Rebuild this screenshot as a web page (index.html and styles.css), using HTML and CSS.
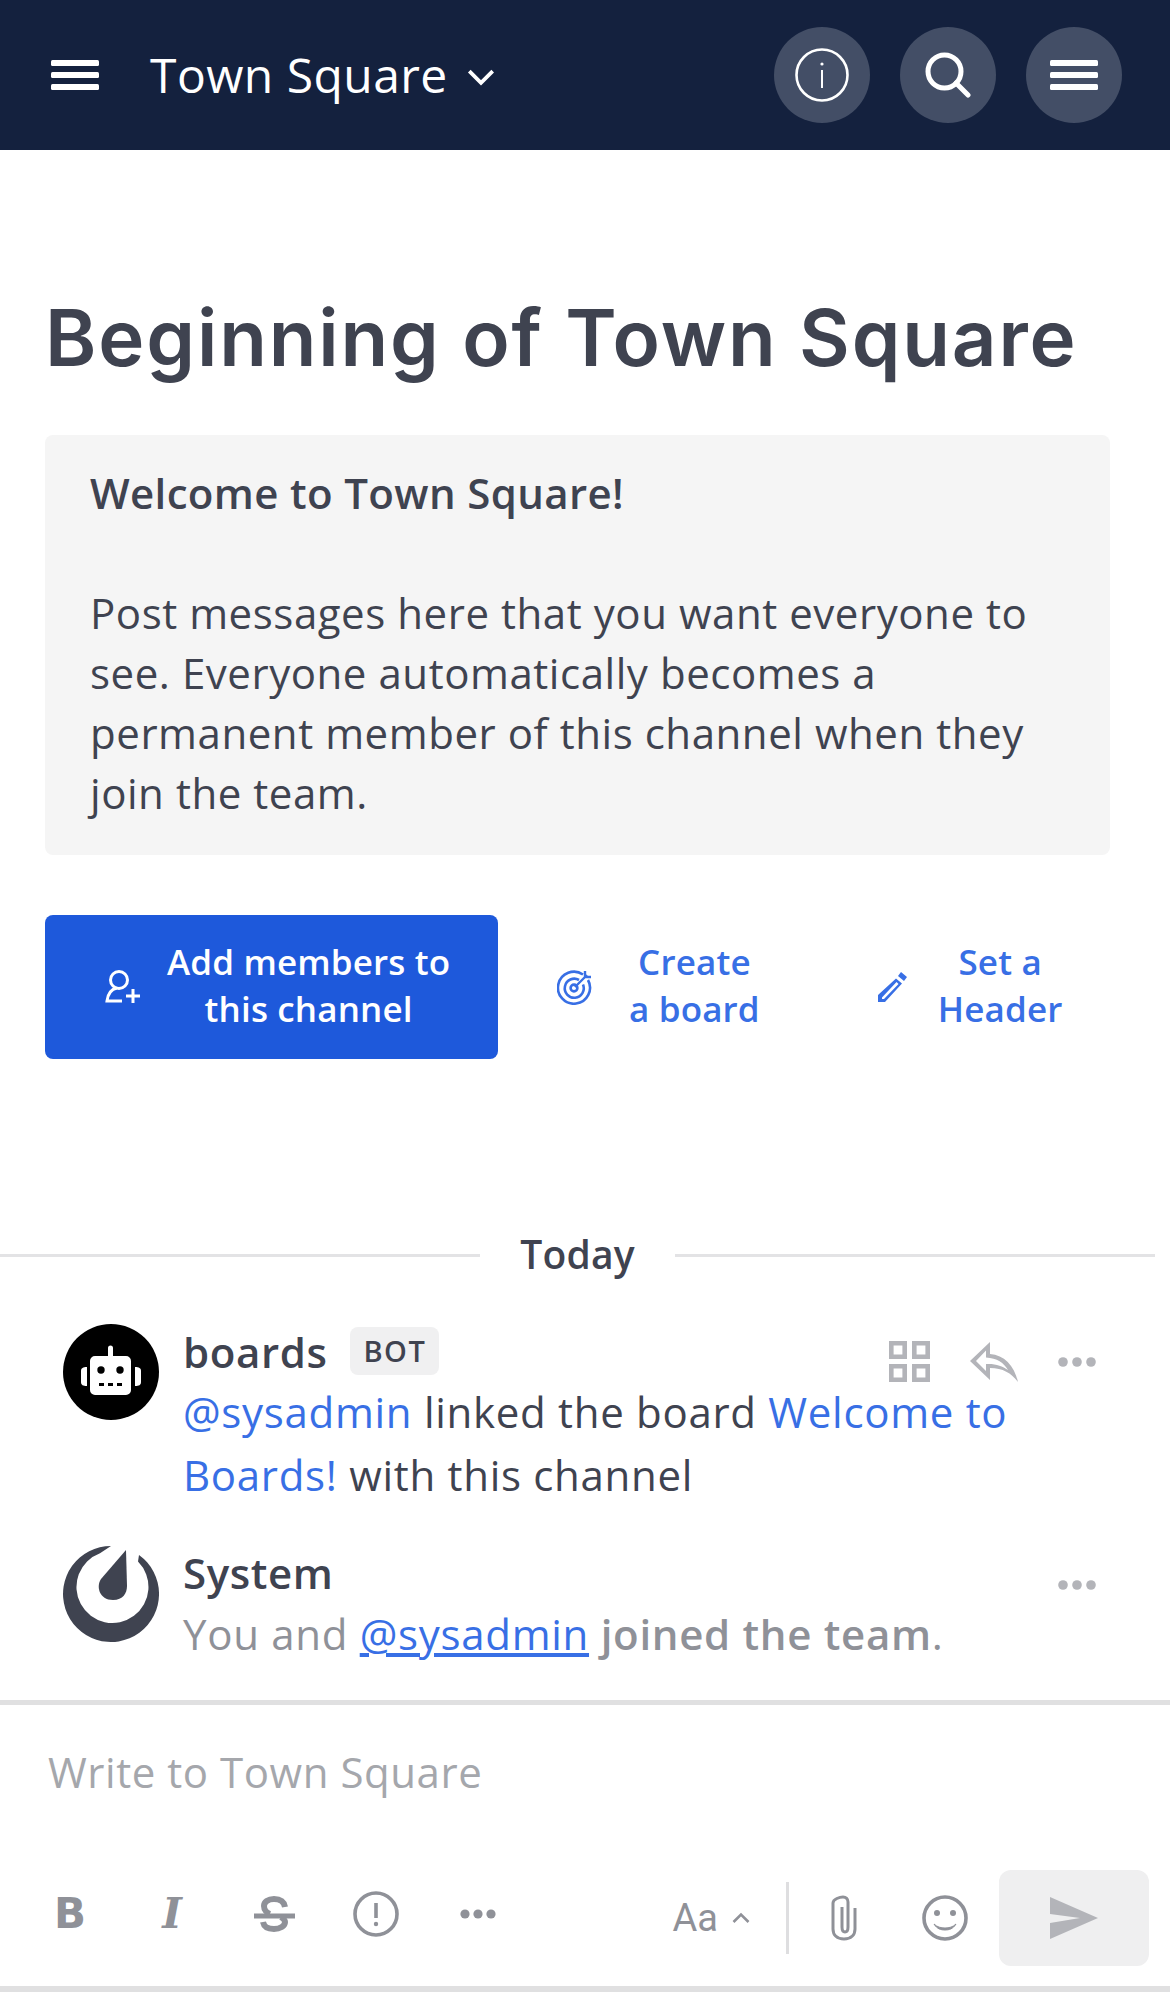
FILE: index.html
```html
<!DOCTYPE html>
<html lang="en">
<head>
    <meta charset="UTF-8">
    <meta name="viewport" content="width=device-width, initial-scale=1.0">
    <title>Town Square</title>
    <link rel="stylesheet" href="styles.css">
</head>
<body>
    <header class="topbar">
        <svg class="menu-icon" viewBox="0 0 48 30"><rect width="48" height="6" rx="1.500"/><rect y="12" width="48" height="6" rx="1.500"/><rect y="24" width="48" height="6" rx="1.500"/></svg>
        <div class="channel-name">Town Square</div>
        <svg class="chevron" viewBox="0 0 26 16"><path d="M2 2l11 11L24 2"/></svg>
        <div class="top-actions">
            <div class="round-btn">
                <svg viewBox="0 0 54 54" width="54" height="54"><circle cx="27" cy="27" r="25.500" fill="none" stroke="#fff" stroke-width="2.600"/><circle cx="27" cy="16" r="1.600" fill="#fff"/><path d="M27 22v18" stroke="#fff" stroke-width="2"/></svg>
            </div>
            <div class="round-btn">
                <svg viewBox="0 0 46 46" width="46" height="46"><circle cx="19.500" cy="19.500" r="16.500" fill="none" stroke="#fff" stroke-width="5"/><path d="M31 31l12 12" stroke="#fff" stroke-width="5" stroke-linecap="round"/></svg>
            </div>
            <div class="round-btn">
                <svg viewBox="0 0 48 30" width="48" height="30" fill="#fff"><rect width="48" height="6" rx="1.500"/><rect y="12" width="48" height="6" rx="1.500"/><rect y="24" width="48" height="6" rx="1.500"/></svg>
            </div>
        </div>
    </header>

    <main class="intro">
        <h1>Beginning of Town Square</h1>
        <div class="purpose">
            <strong>Welcome to Town Square!</strong><br><br>
            Post messages here that you want everyone to see. Everyone automatically becomes a permanent member of this channel when they join the team.
        </div>
        <div class="intro-actions">
            <div class="action primary">
                <svg viewBox="0 0 36 36" width="36" height="36" fill="none" stroke="#fff" stroke-width="3"><circle cx="14" cy="11" r="8.500"/><path d="M12 19c-5 1-9 5-10 13h15"/><path d="M28 20v14M21 27h14"/></svg>
                <span>Add members to<br>this channel</span>
            </div>
            <div class="action board">
                <svg viewBox="0 0 36 36" width="36" height="36" fill="none" stroke="#386fe5" stroke-width="2.600"><path d="M26 5.500A16 16 0 1 0 31 11"/><path d="M22 11a9.500 9.500 0 1 0 4 4.500"/><circle cx="17" cy="19" r="3.400"/><path d="M18 18L30 6M28 2v6h6" stroke-width="2.400"/></svg>
                <span>Create<br>a board</span>
            </div>
            <div class="action header">
                <svg viewBox="0 0 32 36" width="32" height="36" fill="#386fe5"><path d="M24 3l6 5-3 4-6-5zM19 9.500l6 5L8 33H1v-7zM19.500 13L5 28.500V30h2l14.500-15z" fill-rule="evenodd"/></svg>
                <span>Set a<br>Header</span>
            </div>
        </div>
    </main>

    <div class="date-sep">
        <span class="sep-line"></span>
        <span class="sep-text">Today</span>
        <span class="sep-line"></span>
    </div>

    <section class="posts">
        <article class="post">
            <div class="avatar bot">
                <svg viewBox="0 0 96 96" width="96" height="96"><circle cx="48" cy="48" r="48"/><path fill="#fff" d="M45 24a2.500 2.500 0 0 1 5 0v8h13a5 5 0 0 1 5 5v29a5 5 0 0 1-5 5H32a5 5 0 0 1-5-5V37a5 5 0 0 1 5-5h13zM24 43v19c-4 0-6-1-6-4V47c0-3 2-4 6-4zM72 43v19c4 0 6-1 6-4V47c0-3-2-4-6-4z"/><circle cx="38" cy="46" r="3.700"/><circle cx="57" cy="46" r="3.700"/><path d="M36 59h5v3h-5zM45 59h5v3h-5zM54 59h5v3h-5z"/></svg>
            </div>
            <div class="post-body">
                <div class="post-head"><span class="author">boards</span><span class="bot-tag">BOT</span></div>
                <p class="msg"><a class="link">@sysadmin</a> linked the board <a class="link">Welcome to Boards!</a> with this channel</p>
            </div>
            <div class="post-tools">
                <svg viewBox="0 0 41 41" width="41" height="41" fill="none" stroke="#b3b4b9" stroke-width="4.600"><path d="M2.300 2.300h13.400v13.400H2.300zM25.300 2.300h13.400v13.400H25.300zM2.300 25.300h13.400v13.400H2.300zM25.300 25.300h13.400v13.400H25.300z"/></svg>
                <svg viewBox="0 0 48 40" width="48" height="40" fill="#b3b4b9"><path d="M20 0v12c14 1 24 11 28 28-7-9-15-14-28-14v12L0 19zM16 8.500L6 19l10 10v-7c10-.5 16 2 22 6-4-7-11-12-22-12.500z" fill-rule="evenodd"/></svg>
                <svg viewBox="0 0 38 10" width="38" height="10" fill="#b3b4b9"><circle cx="5" cy="5" r="4.800"/><circle cx="19" cy="5" r="4.800"/><circle cx="33" cy="5" r="4.800"/></svg>
            </div>
        </article>
        <article class="post system">
            <div class="avatar">
                <svg viewBox="0 0 96 96" width="96" height="96" fill="#3f4350"><path d="M48 0A48 48 0 1 0 76 9L75 15.600A36 36 0 1 1 37 7.200z"/><path d="M63 4L38 33C33 40 36 54 50 54C60 54 64 47 64 40z"/></svg>
            </div>
            <div class="post-body">
                <div class="post-head"><span class="author">System</span></div>
                <p class="msg muted">You and <a class="link under">@sysadmin</a> <b>joined the team</b>.</p>
            </div>
            <div class="post-tools">
                <svg viewBox="0 0 38 10" width="38" height="10" fill="#b3b4b9"><circle cx="5" cy="5" r="4.800"/><circle cx="19" cy="5" r="4.800"/><circle cx="33" cy="5" r="4.800"/></svg>
            </div>
        </article>
    </section>

    <footer class="composer">
        <div class="placeholder">Write to Town Square</div>
        <div class="toolbar">
            <div class="format-tools">
                <span class="fmt b">B</span>
                <span class="fmt i">I</span>
                <span class="fmt"><svg viewBox="0 0 41 36" width="41" height="36" fill="none" stroke="#8f9198" stroke-width="6"><path d="M31 11C30 5 25 3 20 3C14 3 10 6 10 10C10 14 13 17 16 18"/><path d="M9 26C10 31 14 33 20 33C26 33 31 30 31 26C31 24 30 23 27 21"/><path d="M0 20h41" stroke-width="5"/></svg></span>
                <span class="fmt"><svg viewBox="0 0 46 46" width="46" height="46" fill="none" stroke="#8f9198" stroke-width="3.600"><circle cx="23" cy="23" r="21"/><path d="M23 12v15"/><circle cx="23" cy="33" r="2.200" fill="#8f9198" stroke="none"/></svg></span>
                <span class="fmt"><svg viewBox="0 0 36 10" width="36" height="10" fill="#8f9198"><circle cx="5" cy="5" r="4.600"/><circle cx="18" cy="5" r="4.600"/><circle cx="31" cy="5" r="4.600"/></svg></span>
            </div>
            <div class="right-tools">
                <span class="aa">Aa</span>
                <svg class="caret" viewBox="0 0 18 12" width="18" height="12" fill="none" stroke="#8f9198" stroke-width="2.600"><path d="M1.500 10L9 2.500 16.500 10"/></svg>
                <span class="divider"></span>
                <svg class="clip" viewBox="0 0 26 46" width="26" height="46" fill="none" stroke="#8f9198" stroke-width="3"><path d="M11 12v20c0 3 1 5 3 5s3-2 3-5V7c0-3-2-5-5-5S2 4 2 8v26c0 6 4 10 11 10s11-4 11-10V13"/></svg>
                <svg class="smile" viewBox="0 0 46 46" width="46" height="46" fill="none" stroke="#8f9198" stroke-width="3.600"><circle cx="23" cy="23" r="21"/><circle cx="15" cy="18" r="3" fill="#8f9198" stroke="none"/><circle cx="31" cy="18" r="3" fill="#8f9198" stroke="none"/><path d="M12 29c3 3 7 4 11 4s8-1 11-4c-3 5-7 6-11 6s-8-1-11-6z" fill="#8f9198" stroke-width="1"/></svg>
                <div class="send">
                    <svg viewBox="0 0 48 42" width="48" height="42" fill="#b3b4b9"><path d="M0 0l48 21L0 42V26l30-5L0 17z"/></svg>
                </div>
            </div>
        </div>
    </footer>
</body>
</html>
```

FILE: styles.css
```css
* {
    box-sizing: border-box;
}

html, body {
    margin: 0;
    padding: 0;
}

body {
    width: 1170px;
    height: 1992px;
    overflow: hidden;
    background: #fff;
    color: #3f4350;
    font-family: "Open Sans", sans-serif;
    display: flex;
    flex-direction: column;
}

svg {
    display: block;
    flex: none;
}

/* Top bar */
.topbar {
    height: 150px;
    background: #14213e;
    display: flex;
    align-items: center;
    padding: 0 48px 0 51px;
    color: #fff;
}

.menu-icon {
    width: 48px;
    height: 30px;
    fill: #fff;
}

.channel-name {
    margin-left: 51px;
    font-size: 48px;
    line-height: 60px;
    letter-spacing: 0.450px;
}

.chevron {
    width: 28px;
    height: 17px;
    margin-left: 19px;
    margin-top: 4px;
    fill: none;
    stroke: #fff;
    stroke-width: 3.500;
}

.top-actions {
    margin-left: auto;
    display: flex;
    gap: 30px;
}

.round-btn {
    width: 96px;
    height: 96px;
    border-radius: 50%;
    background: #434e66;
    display: flex;
    align-items: center;
    justify-content: center;
}

/* Channel intro */
.intro {
    padding: 0 45px;
    width: 1155px;
}

h1 {
    margin: 0;
    padding-top: 140px;
    font-family: Inter, sans-serif;
    font-size: 78px;
    line-height: 96px;
    font-weight: 600;
    letter-spacing: 1.850px;
    white-space: nowrap;
}

.purpose {
    margin-top: 49px;
    width: 1065px;
    height: 420px;
    background: #f5f5f5;
    border-radius: 8px;
    padding: 28px 45px;
    font-size: 42px;
    line-height: 60px;
    letter-spacing: 0.550px;
}

.purpose strong {
    font-weight: 600;
    letter-spacing: 0.350px;
}

.intro-actions {
    margin-top: 60px;
    display: flex;
    align-items: center;
    text-align: center;
    font-size: 35px;
    line-height: 47px;
    font-weight: 600;
    letter-spacing: 0.150px;
    color: #386fe5;
}

.action {
    display: flex;
    align-items: center;
    height: 144px;
}

.action span {
    margin-top: -4px;
}

.action.primary {
    width: 453px;
    background: #1e59db;
    border-radius: 8px;
    color: #fff;
    padding-left: 60px;
    gap: 26px;
}

.action.board {
    margin-left: 59px;
    gap: 36px;
}

.action.header {
    margin-left: 117px;
    gap: 29px;
}

/* Date separator */
.date-sep {
    margin-top: 172px;
    width: 1155px;
    display: flex;
    align-items: center;
    font-size: 39px;
    line-height: 50px;
    font-weight: 600;
    letter-spacing: 0.200px;
}

.sep-line {
    flex: 1;
    height: 3px;
    background: #e3e3e5;
}

.sep-text {
    margin-top: -2px;
    padding: 0 40px;
}

/* Posts */
.posts {
    margin-top: 45px;
    flex: 1;
}

.post {
    position: relative;
    display: flex;
    padding: 0 0 0 63px;
    gap: 24px;
}

.post.system {
    margin-top: 40px;
}

.avatar {
    width: 96px;
    height: 96px;
    flex: none;
}

.post-body {
    width: 830px;
}

.post-head {
    display: flex;
    align-items: center;
    height: 58px;
    margin-top: -2px;
}

.post.system .post-head {
    height: 59px;
    margin-top: -3px;
}

.author {
    font-size: 42px;
    font-weight: 600;
    letter-spacing: 0.600px;
}

.bot-tag {
    margin-left: 23px;
    background: #f0f0f1;
    border-radius: 8px;
    padding: 0 13px;
    font-size: 29px;
    line-height: 48px;
    font-weight: 600;
    letter-spacing: 1.500px;
}

.msg {
    margin: 0;
    font-size: 42px;
    line-height: 63px;
    letter-spacing: 0.700px;
}

.msg.muted {
    color: #8f9198;
}

.msg b {
    font-weight: 600;
}

.link {
    color: #386fe5;
}

.link.under {
    text-decoration: underline;
}

.post-tools {
    position: absolute;
    top: 17px;
    right: 74px;
    display: flex;
    align-items: center;
    gap: 40px;
}

.post.system .post-tools {
    top: 34px;
}

/* Composer */
.composer {
    height: 292px;
    border-top: 5px solid #e0e0e1;
    border-bottom: 6px solid #e0e0e1;
    padding-right: 21px;
}

.placeholder {
    padding: 39px 0 0 48px;
    font-size: 42px;
    line-height: 56px;
    letter-spacing: 0.550px;
    color: #a5a7ac;
}

.toolbar {
    margin-top: 70px;
    display: flex;
    align-items: center;
    justify-content: space-between;
}

.format-tools {
    display: flex;
    align-items: center;
    padding-left: 19px;
    margin-bottom: 8px;
}

.fmt {
    width: 102px;
    display: flex;
    justify-content: center;
    font-family: "DejaVu Sans", sans-serif;
    font-size: 42px;
    font-weight: 700;
    color: #8f9198;
    line-height: 46px;
}

.fmt.i {
    font-family: "DejaVu Serif", serif;
    font-style: italic;
}

.right-tools {
    display: flex;
    align-items: center;
}

.aa {
    font-family: Roboto, sans-serif;
    font-size: 38px;
    color: #8f9198;
}

.caret {
    margin-left: 14px;
}

.divider {
    width: 3px;
    height: 72px;
    background: #dedee0;
    margin-left: 36px;
}

.clip {
    margin-left: 42px;
}

.smile {
    margin-left: 65px;
}

.send {
    margin-left: 31px;
    width: 150px;
    height: 96px;
    border-radius: 12px;
    background: #efeff0;
    display: flex;
    align-items: center;
    justify-content: center;
}
```
